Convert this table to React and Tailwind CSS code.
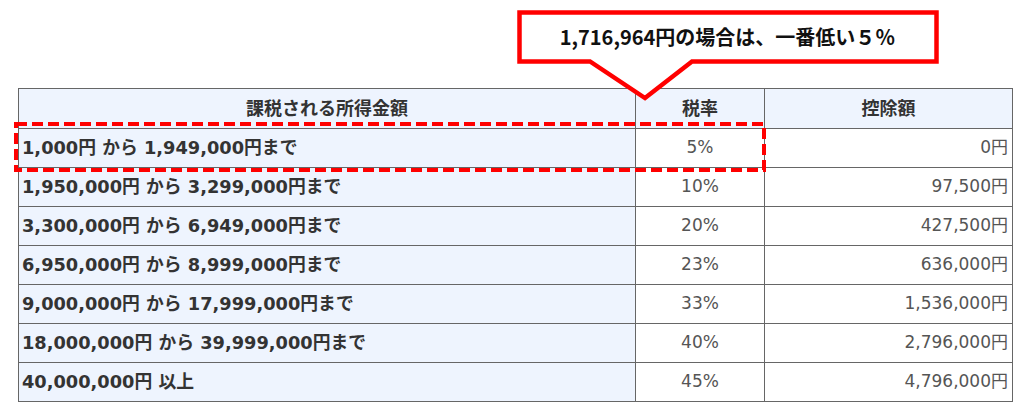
import React from "react";

const rows = [
  { range: "1,000円 から 1,949,000円まで", rate: "5%", deduction: "0円" },
  { range: "1,950,000円 から 3,299,000円まで", rate: "10%", deduction: "97,500円" },
  { range: "3,300,000円 から 6,949,000円まで", rate: "20%", deduction: "427,500円" },
  { range: "6,950,000円 から 8,999,000円まで", rate: "23%", deduction: "636,000円" },
  { range: "9,000,000円 から 17,999,000円まで", rate: "33%", deduction: "1,536,000円" },
  { range: "18,000,000円 から 39,999,000円まで", rate: "40%", deduction: "2,796,000円" },
  { range: "40,000,000円 以上", rate: "45%", deduction: "4,796,000円" },
];

const App = () => {
  return (
    <div
      className="relative w-[1024px] h-[420px] bg-white overflow-hidden"
      style={{ fontFamily: '"DejaVu Sans", "Noto Sans CJK JP", sans-serif' }}
    >
      <div className="pt-[88px] pl-[18px]">
        <table className="border-collapse text-[17px] text-[#333]">
          <thead>
            <tr className="h-[40px] bg-[#eef4fe]">
              <th className="w-[617px] border border-[#666] font-bold text-center text-[18px]">課税される所得金額</th>
              <th className="w-[129px] border border-[#666] font-bold text-center text-[18px]">税率</th>
              <th className="w-[248px] border border-[#666] font-bold text-center text-[18px]">控除額</th>
            </tr>
          </thead>
          <tbody>
            {rows.map((row) => (
              <tr key={row.range} className="h-[39px]">
                <td className="border border-[#666] bg-[#eef4fe] font-bold text-[17.8px] pl-[3px] whitespace-nowrap">
                  {row.range}
                </td>
                <td className="border border-[#666] bg-white text-center text-[#555]">{row.rate}</td>
                <td className="border border-[#666] bg-white text-right text-[#555] pr-[4px]">
                  {row.deduction}
                </td>
              </tr>
            ))}
          </tbody>
        </table>
      </div>

      {/* annotation overlay: callout bubble + dashed highlight */}
      <svg className="absolute left-0 top-0 pointer-events-none" width="1024" height="420">
        <polygon
          points="519.5,12.5 936.5,12.5 936.5,61.5 692,61.5 645,98 590,61.5 519.5,61.5"
          fill="white"
          stroke="#ff0000"
          strokeWidth="4.5"
          strokeLinejoin="miter"
        />
        <rect
          x="16"
          y="124"
          width="748"
          height="46"
          fill="none"
          stroke="#ff0000"
          strokeWidth="4"
          strokeDasharray="11 5"
        />
      </svg>

      <div
        className="absolute left-[521px] top-[14px] w-[413px] h-[46px] flex items-center justify-center text-[20px] font-bold text-[#111]"
        style={{ fontFamily: '"Noto Sans CJK JP", sans-serif' }}
      >
        1,716,964円の場合は、一番低い５％
      </div>
    </div>
  );
};

export default App;
